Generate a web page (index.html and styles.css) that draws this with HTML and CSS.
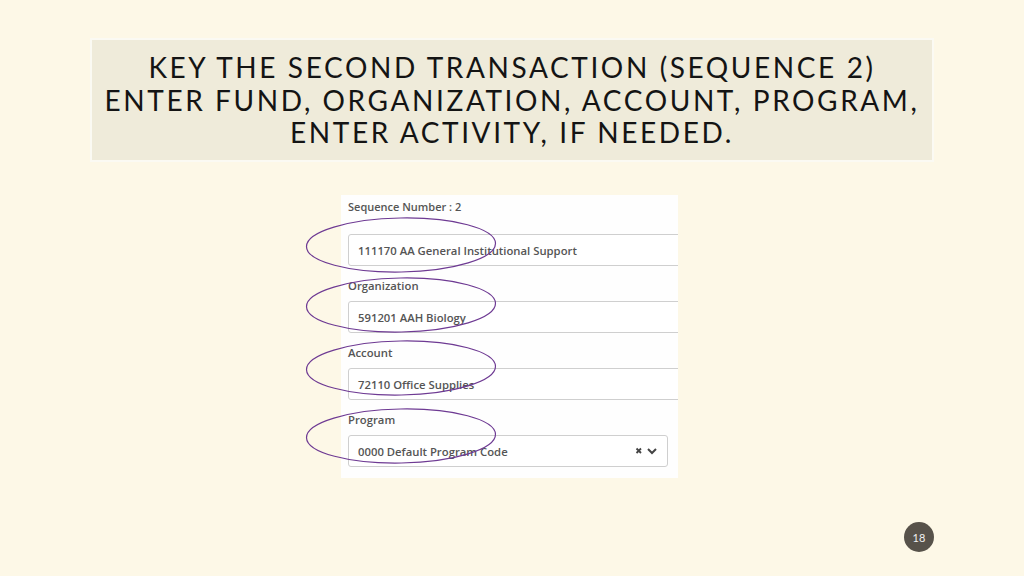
FILE: index.html
```html
<!DOCTYPE html>
<html>
<head>
<meta charset="utf-8">
<link rel="stylesheet" href="styles.css">
</head>
<body>
<div class="slide">
  <div class="title-box">
    <h1 class="title">KEY THE SECOND TRANSACTION (SEQUENCE 2)<br>ENTER FUND, ORGANIZATION, ACCOUNT, PROGRAM,<br>ENTER ACTIVITY, IF NEEDED.</h1>
  </div>
  <div class="panel-wrap">
    <div class="panel">
      <div class="seq">Sequence Number : 2</div>
      <div class="field first"><div class="input wide">111170 AA General Institutional Support</div></div>
      <div class="field"><div class="label">Organization</div><div class="input wide">591201 AAH Biology</div></div>
      <div class="field"><div class="label">Account</div><div class="input wide">72110 Office Supplies</div></div>
      <div class="field"><div class="label">Program</div><div class="input select"><span>0000 Default Program Code</span><span class="icons"><svg width="24" height="10" viewBox="0 0 24 10"><path d="M1.5 2.5 L6 7 M6 2.5 L1.5 7" stroke="#444" stroke-width="1.8"/><path d="M13 3 L17 7 L21 3" stroke="#444" stroke-width="2" fill="none"/></svg></span></div></div>
    </div>
    <svg class="marks" width="220" height="290" viewBox="0 0 220 290">
      <ellipse cx="96" cy="50" rx="94.5" ry="27" transform="rotate(-1 96 50)"/>
      <ellipse cx="96" cy="110" rx="94.5" ry="27" transform="rotate(-1 96 110)"/>
      <ellipse cx="96" cy="173" rx="94.5" ry="27" transform="rotate(-1 96 173)"/>
      <ellipse cx="96" cy="241" rx="94.5" ry="27" transform="rotate(-1 96 241)"/>
    </svg>
  </div>
  <div class="page-num">18</div>
</div>
</body>
</html>
```
FILE: styles.css
```css
html, body { margin: 0; padding: 0; }
body { background: #fdf8e7; width: 1024px; height: 576px; overflow: hidden; }
.slide { position: relative; width: 1024px; height: 576px; display: flex; flex-direction: column; }
.title-box {
  margin: 38px 0 0 90px;
  width: 840px; height: 120px;
  background: #efebda;
  border: 2px solid #fbfaf3;
  display: flex; align-items: center; justify-content: center;
}
.title {
  margin: 0;
  font-family: Lato, "Liberation Sans", sans-serif;
  font-weight: 400;
  font-size: 28px;
  line-height: 32.5px;
  letter-spacing: 2.6px;
  color: #141414;
  text-align: center;
}
.panel-wrap { position: relative; margin: 33px 0 0 341px; width: 337px; height: 283px; }
.panel {
  width: 337px; height: 283px; background: #fefefe; overflow: hidden;
  box-sizing: border-box; padding: 5px 0 0 7px;
  font-family: "Open Sans", "Liberation Sans", sans-serif; color: #555;
  display: flex; flex-direction: column;
}
.seq { font-size: 11px; font-weight: 600; line-height: 14px; }
.field { display: flex; flex-direction: column; }
.field.first { margin-top: 20px; }
.label { font-size: 11.3px; font-weight: 600; line-height: 14px; margin-top: 13px; margin-bottom: 8px; color: #555; }
.input {
  box-sizing: border-box; height: 32px; border: 1px solid #cfcfcf; border-radius: 3px;
  font-size: 11.3px; font-weight: 600; color: #555; padding-left: 9px;
  display: flex; align-items: center; background: #fff;
}
.input.wide { width: 345px; }
.input.select { width: 320px; justify-content: space-between; padding-right: 8px; }
.icons { display: flex; align-items: center; }
.marks { position: absolute; left: -36px; top: 0; overflow: visible; }
.marks ellipse { fill: none; stroke: #6e3a93; stroke-width: 1.2; }
.page-num {
  position: absolute; left: 904px; top: 522px; width: 30px; height: 30px; border-radius: 50%;
  background: #57524a; color: #f0f0f0; font-family: Lato, "Liberation Sans", sans-serif; font-size: 11px;
  display: flex; align-items: center; justify-content: center;
}
```
